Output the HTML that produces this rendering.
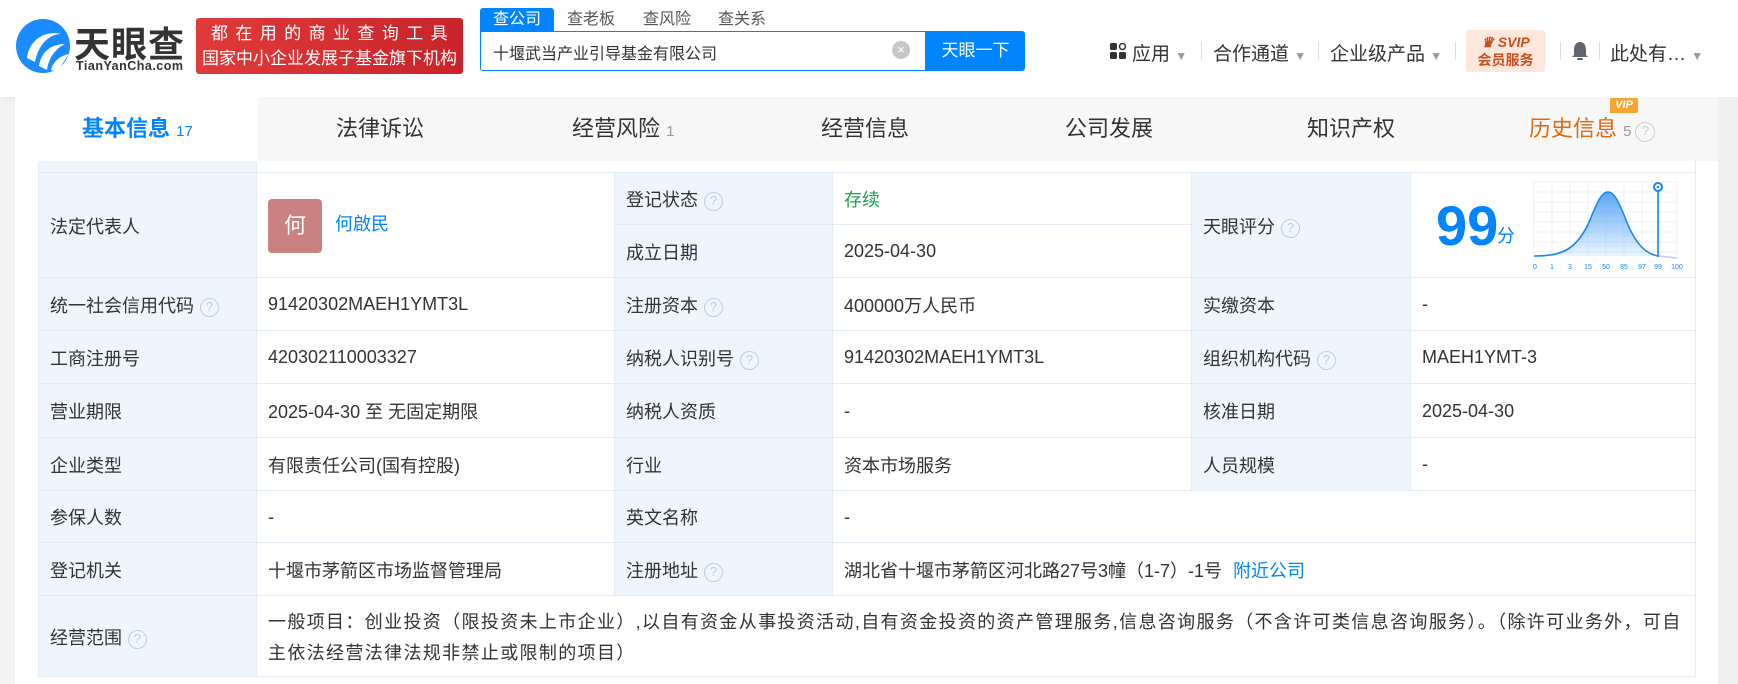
<!DOCTYPE html>
<html><head><meta charset="utf-8"><style>
*{margin:0;padding:0;box-sizing:border-box}
body{width:1738px;height:684px;overflow:hidden;background:#f3f3f3;font-family:"Liberation Sans","Noto Sans CJK SC",sans-serif;color:#333;position:relative}
.a{position:absolute;white-space:nowrap}
.hdr{left:0;top:0;width:1738px;height:97px;background:#fff;box-shadow:0 2px 6px rgba(0,0,0,.06)}
.tabs{left:15px;top:97px;width:1703px;height:64px;background:#f7f7f7}
.tab{top:97px;height:64px;line-height:64px;font-size:22px;color:#333}
.card{left:15px;top:161px;width:1703px;height:523px;background:#fff}
table{position:absolute;left:38px;top:161px;border-collapse:collapse;table-layout:fixed}
td{border:1px solid #e3ebf5;font-size:18px;padding:2px 0 0 11px;color:#333;vertical-align:middle}
td.l{background:#eef5fd}
.q{display:inline-block;width:19px;height:19px;border:1.5px solid #b9cde3;border-radius:50%;color:#b9cde3;font-size:13px;line-height:16px;text-align:center;vertical-align:1px;margin-left:6px}
.bl{color:#0084ff}
</style></head><body>
<div class="a hdr"></div>
<svg class="a" style="left:15px;top:18px" width="56" height="56" viewBox="0 0 56 56">
<circle cx="28" cy="28" r="27" fill="#1a8cff"/>
<path d="M12 40 C14 22 30 12 46 16 C36 16 24 24 20 44 Z" fill="#fff"/>
<path d="M24 48 C26 34 36 26 50 26 C42 30 34 38 32 52 Z" fill="#fff"/>
<path d="M36 52 C38 44 44 38 54 36 C50 42 46 48 42 54 Z" fill="#fff"/>
</svg>
<div class="a" style="left:74px;top:16px;font-size:36px;font-weight:bold;color:#333;letter-spacing:1px">天眼查</div>
<div class="a" style="left:76px;top:59px;font-size:12.5px;color:#333;letter-spacing:.5px;font-weight:bold">TianYanCha.com</div>
<div class="a" style="left:196px;top:18px;width:267px;height:56px;background:linear-gradient(90deg,#e13a3a,#c8242a);border-radius:3px;color:#fff;font-size:17px;text-align:center;line-height:25px;padding-top:3px">
<div style="letter-spacing:7.4px;padding-left:7px">都在用的商业查询工具</div><div>国家中小企业发展子基金旗下机构</div></div>
<div class="a" style="left:480px;top:8px;width:74px;height:24px;background:#0084ff;color:#fff;font-size:16px;text-align:center;line-height:24px;border-radius:3px 3px 0 0">查公司</div>
<div class="a" style="left:567px;top:8px;font-size:16px;color:#555;line-height:24px">查老板</div>
<div class="a" style="left:643px;top:8px;font-size:16px;color:#555;line-height:24px">查风险</div>
<div class="a" style="left:718px;top:8px;font-size:16px;color:#555;line-height:24px">查关系</div>
<div class="a" style="left:480px;top:31px;width:446px;height:40px;border:1px solid #0084ff;border-radius:0 0 0 3px"></div>
<div class="a" style="left:493px;top:40px;font-size:16px;color:#333">十堰武当产业引导基金有限公司</div>
<div class="a" style="left:892px;top:41px;width:18px;height:18px;border-radius:50%;background:#c7c7c7;color:#fff;font-size:13px;line-height:18px;text-align:center">×</div>
<div class="a" style="left:926px;top:31px;width:99px;height:40px;background:#0084ff;color:#fff;font-size:17px;text-align:center;line-height:40px;border-radius:0 3px 3px 0">天眼一下</div>
<svg class="a" style="left:1110px;top:43px" width="16" height="16"><rect x="0" y="0" width="7" height="7" rx="1.5" fill="#333"/><rect x="0" y="9" width="7" height="7" rx="1.5" fill="#333"/><rect x="9" y="9" width="7" height="7" rx="1.5" fill="#333"/><circle cx="12.5" cy="3.5" r="3" fill="none" stroke="#333" stroke-width="1.5"/></svg>
<div class="a" style="left:1132px;top:39px;font-size:19px">应用 <span style="color:#999;font-size:12px">▼</span></div>
<div class="a" style="left:1201px;top:42px;width:1px;height:18px;background:#ddd"></div>
<div class="a" style="left:1213px;top:39px;font-size:19px">合作通道 <span style="color:#999;font-size:12px">▼</span></div>
<div class="a" style="left:1318px;top:42px;width:1px;height:18px;background:#ddd"></div>
<div class="a" style="left:1330px;top:39px;font-size:19px">企业级产品 <span style="color:#999;font-size:12px">▼</span></div>
<div class="a" style="left:1455px;top:42px;width:1px;height:18px;background:#ddd"></div>
<div class="a" style="left:1466px;top:30px;width:79px;height:42px;background:#fde6dc;border-radius:3px;text-align:center;color:#c8501b;font-weight:bold;font-size:14px;line-height:18px;padding-top:3px"><div style="font-style:italic">♛ SVIP</div><div>会员服务</div></div>
<div class="a" style="left:1560px;top:42px;width:1px;height:18px;background:#ddd"></div>
<svg class="a" style="left:1570px;top:40px" width="20" height="22"><path d="M10 2 C5 2 4 7 4 10 L4 15 L2 17 L18 17 L16 15 L16 10 C16 7 15 2 10 2Z" fill="#5f6670"/><rect x="7" y="18" width="6" height="2" rx="1" fill="#5f6670"/></svg>
<div class="a" style="left:1599px;top:42px;width:1px;height:18px;background:#ddd"></div>
<div class="a" style="left:1610px;top:39px;font-size:19px">此处有… <span style="color:#999;font-size:12px">▼</span></div>
<div class="a tabs"></div>
<div class="a" style="left:15px;top:97px;width:243px;height:64px;background:#fff"></div>
<div class="a tab" style="left:82px;color:#0084ff;font-weight:bold">基本信息 <span style="font-size:15px;font-weight:normal">17</span></div>
<div class="a tab" style="left:336px">法律诉讼</div>
<div class="a tab" style="left:572px">经营风险 <span style="font-size:15px;color:#999">1</span></div>
<div class="a tab" style="left:821px">经营信息</div>
<div class="a tab" style="left:1065px">公司发展</div>
<div class="a tab" style="left:1307px">知识产权</div>
<div class="a tab" style="left:1529px;color:#e0690f">历史信息 <span style="font-size:15px;color:#999">5</span><span class="q" style="border-color:#ccc;color:#ccc;width:20px;height:20px;margin-left:4px">?</span></div>
<div class="a" style="left:1610px;top:98px;width:28px;height:15px;background:#f7a531;color:#fff;font-size:11px;font-weight:bold;font-style:italic;text-align:center;line-height:15px;border-radius:2px 2px 2px 0">VIP</div>
<div class="a card"></div>
<div class="a" style="left:1718px;top:97px;width:20px;height:587px;background:#f0f0f0"></div>
<table>
<colgroup><col style="width:218px"><col style="width:358px"><col style="width:218px"><col style="width:359px"><col style="width:219px"><col style="width:285px"></colgroup>
<tr style="height:11px"><td class="l" style="border-top:0"></td><td colspan="5" style="border-top:0"></td></tr>
<tr style="height:52px"><td class="l" rowspan="2">法定代表人</td>
<td rowspan="2"><span style="display:inline-block;width:54px;height:54px;background:#c9827f;border-radius:4px;color:#fff;font-size:22px;text-align:center;line-height:54px;vertical-align:middle">何</span> <span class="bl" style="margin-left:8px">何啟民</span></td>
<td class="l">登记状态<span class="q">?</span></td><td style="color:#1aa34a">存续</td>
<td class="l" rowspan="2">天眼评分<span class="q">?</span></td>
<td rowspan="2" style="position:relative"></td></tr>
<tr style="height:53px"><td class="l">成立日期</td><td>2025-04-30</td></tr>
<tr style="height:53px"><td class="l">统一社会信用代码<span class="q">?</span></td><td>91420302MAEH1YMT3L</td><td class="l">注册资本<span class="q">?</span></td><td>400000万人民币</td><td class="l">实缴资本</td><td>-</td></tr>
<tr style="height:53px"><td class="l">工商注册号</td><td>420302110003327</td><td class="l">纳税人识别号<span class="q">?</span></td><td>91420302MAEH1YMT3L</td><td class="l">组织机构代码<span class="q">?</span></td><td>MAEH1YMT-3</td></tr>
<tr style="height:54px"><td class="l">营业期限</td><td>2025-04-30 至 无固定期限</td><td class="l">纳税人资质</td><td>-</td><td class="l">核准日期</td><td>2025-04-30</td></tr>
<tr style="height:53px"><td class="l">企业类型</td><td>有限责任公司(国有控股)</td><td class="l">行业</td><td>资本市场服务</td><td class="l">人员规模</td><td>-</td></tr>
<tr style="height:52px"><td class="l">参保人数</td><td>-</td><td class="l">英文名称</td><td colspan="3">-</td></tr>
<tr style="height:53px"><td class="l">登记机关</td><td>十堰市茅箭区市场监督管理局</td><td class="l">注册地址<span class="q">?</span></td><td colspan="3">湖北省十堰市茅箭区河北路27号3幢（1-7）-1号 <span class="bl" style="margin-left:6px">附近公司</span></td></tr>
<tr style="height:81px"><td class="l">经营范围<span class="q">?</span></td><td colspan="5" style="line-height:31px;padding:4px 0 0 11px;white-space:nowrap;letter-spacing:1.35px">一般项目：创业投资（限投资未上市企业）,以自有资金从事投资活动,自有资金投资的资产管理服务,信息咨询服务（不含许可类信息咨询服务）。（除许可业务外，可自<br>主依法经营法律法规非禁止或限制的项目）</td></tr>
</table>
<div class="a" style="left:1436px;top:196px;font-size:56px;font-weight:bold;color:#0084ff;line-height:60px">99</div>
<div class="a" style="left:1497px;top:222px;font-size:18px;color:#0084ff">分</div>
<svg class="a" style="left:1532px;top:180px" width="152" height="92" viewBox="0 0 152 92">
<defs><linearGradient id="g" x1="0" y1="0" x2="0" y2="1"><stop offset="0" stop-color="#3d98f5" stop-opacity=".85"/><stop offset="1" stop-color="#3d98f5" stop-opacity=".1"/></linearGradient></defs>
<g stroke="#eef2f7" stroke-width="1">
<path d="M2 2H145M2 12H145M2 22H145M2 32H145M2 42H145M2 52H145M2 62H145M2 72H145"/>
<path d="M2 2V77M20 2V77M38 2V77M56 2V77M74 2V77M92 2V77M110 2V77M128 2V77M145 2V77"/></g>
<path d="M2 76 C30 76 45 70 58 40 C66 20 70 12 76 12 C82 12 86 20 94 40 C104 66 115 74 126 76 Z" fill="url(#g)"/>
<path d="M2 76 C30 76 45 70 58 40 C66 20 70 12 76 12 C82 12 86 20 94 40 C104 66 115 74 126 76" fill="none" stroke="#1a85f0" stroke-width="1.6"/>
<path d="M126 76 L145 78" stroke="#ccd" stroke-width="1.5"/>
<line x1="126" y1="10" x2="126" y2="77" stroke="#1a85f0" stroke-width="1.6"/>
<circle cx="126" cy="7" r="4" fill="#fff" stroke="#1a85f0" stroke-width="2"/><circle cx="126" cy="7" r="1.3" fill="#1a85f0"/>
<g font-size="7" fill="#1a85f0" font-family="Liberation Sans" text-anchor="middle">
<text x="3" y="89">0</text><text x="20" y="89">1</text><text x="38" y="89">3</text><text x="56" y="89">15</text><text x="74" y="89">50</text><text x="92" y="89">85</text><text x="110" y="89">97</text><text x="126" y="89">99</text><text x="145" y="89">100</text></g>
</svg>
</body></html>
